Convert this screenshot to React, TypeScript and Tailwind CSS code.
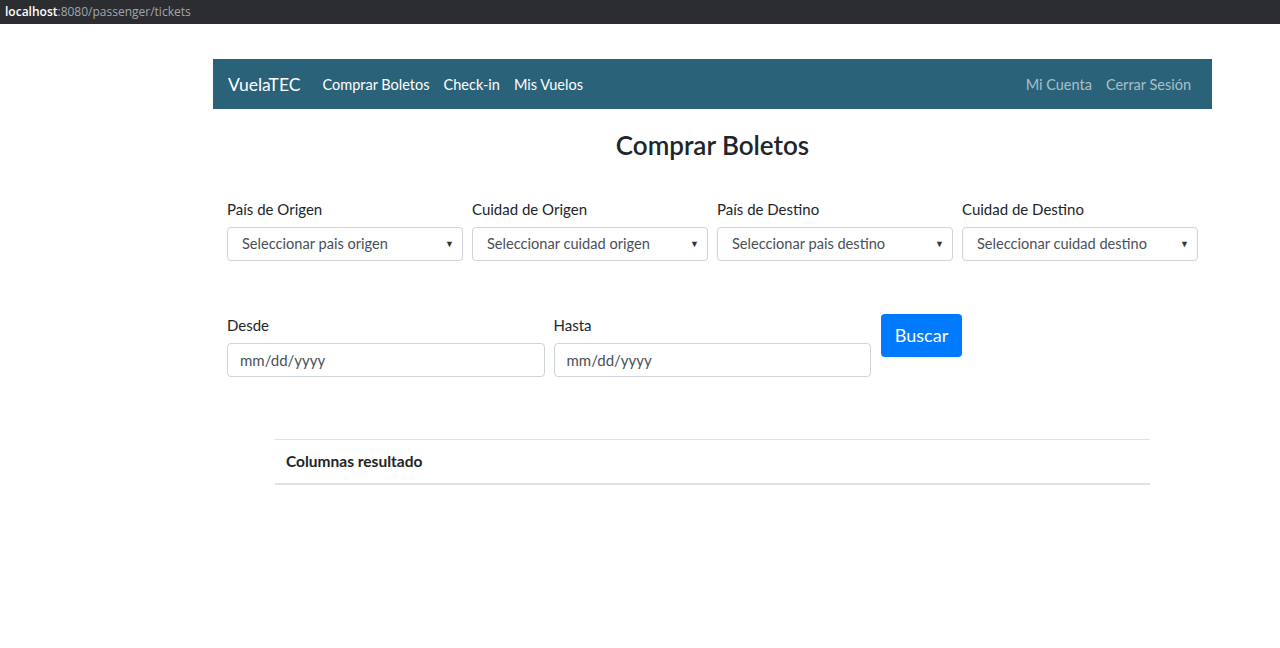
import React from "react";

const font = { fontFamily: '"Lato", "Open Sans", sans-serif' };

function Select({ text }: { text: string }) {
  return (
    <div className="flex h-[34px] items-center justify-between rounded-[4px] border border-[#ced4da] bg-white pl-[14px] pr-[8px] text-[14.6px] text-[#495057]">
      <span>{text}</span>
      <span className="text-[9px] text-[#333]">▼</span>
    </div>
  );
}

function Field({ label, text }: { label: string; text: string }) {
  return (
    <div className="flex flex-col">
      <label className="mb-[9px] text-[15px] leading-[18px] text-[#212529]">{label}</label>
      <Select text={text} />
    </div>
  );
}

function DateField({ label }: { label: string }) {
  return (
    <div className="flex flex-col">
      <label className="mb-[9px] text-[15px] leading-[18px] text-[#212529]">{label}</label>
      <div className="flex h-[34px] items-center rounded-[4px] border border-[#ced4da] bg-white pl-[12px] text-[15px] text-[#495057]">
        mm/dd/yyyy
      </div>
    </div>
  );
}

export default function App() {
  return (
    <div className="min-h-[648px] bg-white" style={font}>
      <div className="flex h-[24px] items-center bg-[#2b2d31] pl-[5px] text-[12px]" style={{ fontFamily: '"Open Sans", sans-serif' }}>
        <span className="font-semibold text-white">localhost</span>
        <span className="text-[#a4a6a9]">:8080/passenger/tickets</span>
      </div>
      <div className="ml-[213px] w-[999px] pt-[35px]">
        <nav className="flex h-[50px] items-center bg-[#2a6279] pl-[15px] pr-[21px] pt-[2px]">
          <span className="mr-[22px] text-[17.5px] text-white">VuelaTEC</span>
          <div className="flex gap-[14px] text-[14.5px] text-white">
            <span>Comprar Boletos</span>
            <span>Check-in</span>
            <span>Mis Vuelos</span>
          </div>
          <div className="ml-auto flex gap-[14px] text-[14.5px] text-[#a9c0c9]">
            <span>Mi Cuenta</span>
            <span>Cerrar Sesión</span>
          </div>
        </nav>
        <h3 className="mt-[19px] text-center text-[26px] font-semibold leading-[34px] text-[#212529]">Comprar Boletos</h3>
        <div className="mt-[38px] grid grid-cols-4 gap-[9px] px-[14px]">
          <Field label="País de Origen" text="Seleccionar pais origen" />
          <Field label="Cuidad de Origen" text="Seleccionar cuidad origen" />
          <Field label="País de Destino" text="Seleccionar pais destino" />
          <Field label="Cuidad de Destino" text="Seleccionar cuidad destino" />
        </div>
        <div className="mt-[47px] flex items-start px-[14px]">
          <div className="mt-[8px] grid w-[644px] grid-cols-2 gap-[9px]">
            <DateField label="Desde" />
            <DateField label="Hasta" />
          </div>
          <button className="ml-[10px] mt-[6px] h-[43px] w-[81px] rounded-[4px] bg-[#007bff] text-[18px] text-white">Buscar</button>
        </div>
        <div className="mx-[62px] mt-[62px] border-t border-[#dee2e6]">
          <div className="border-b-2 border-[#dee2e6] px-[11px] py-[12px] text-[15.5px] font-bold leading-[19px] text-[#212529]">
            Columnas resultado
          </div>
        </div>
      </div>
    </div>
  );
}
